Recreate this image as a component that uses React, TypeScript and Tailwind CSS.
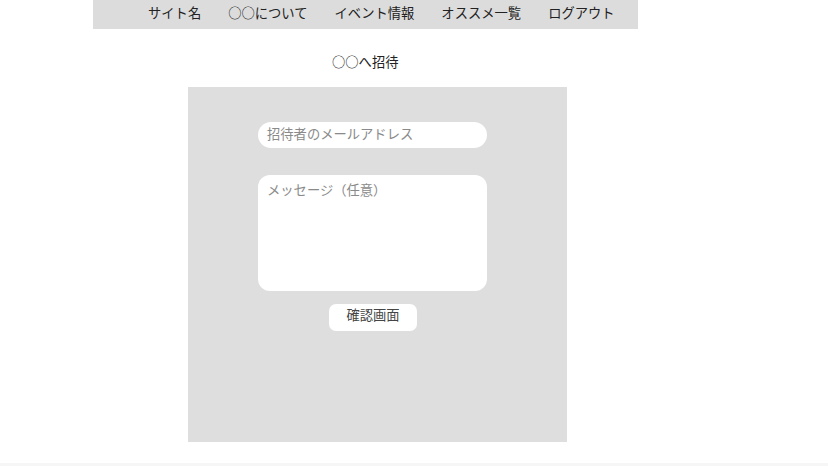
export default function App() {
  const navItems = ['サイト名', '○○について', 'イベント情報', 'オススメ一覧', 'ログアウト']

  return (
    <div
      className="w-[828px] h-[466px] bg-white text-[#222] overflow-hidden flex flex-col"
      style={{ fontFamily: '"Noto Sans CJK JP", "Noto Sans", sans-serif' }}
    >
      {/* Header */}
      <nav className="ml-[93px] w-[545px] h-[29px] shrink-0 bg-[#dcdcdc] flex items-center gap-[27px] pl-[55px] text-[13.3px] leading-none pb-[4px]">
        {navItems.map(item => (
          <span key={item} className="whitespace-nowrap">
            {item}
          </span>
        ))}
      </nav>

      {/* Title */}
      <h1 className="ml-[332px] mt-[26px] text-[13.3px] leading-none">○○へ招待</h1>

      {/* Form panel */}
      <div className="ml-[188px] mt-[19px] w-[379px] h-[355px] shrink-0 bg-[#dedede] pt-[35px] flex flex-col">
        <div className="ml-[70px] w-[229px] h-[26px] bg-white rounded-full flex items-center pl-[9px] pb-[3px] text-[13.3px] leading-none text-[#8a8a8a]">
          招待者のメールアドレス
        </div>
        <div className="ml-[70px] mt-[27px] w-[229px] h-[116px] bg-white rounded-[12px] pl-[9px] pt-[8px] text-[13.3px] leading-none text-[#8a8a8a]">
          メッセージ（任意）
        </div>
        <button className="ml-[141px] mt-[13px] w-[88px] h-[27px] bg-white rounded-[7px] flex justify-center pt-[4px] text-[13.3px] leading-none text-[#444]">
          確認画面
        </button>
      </div>

      <div className="mt-auto h-[3px] bg-[#f6f6f6]" />
    </div>
  )
}
